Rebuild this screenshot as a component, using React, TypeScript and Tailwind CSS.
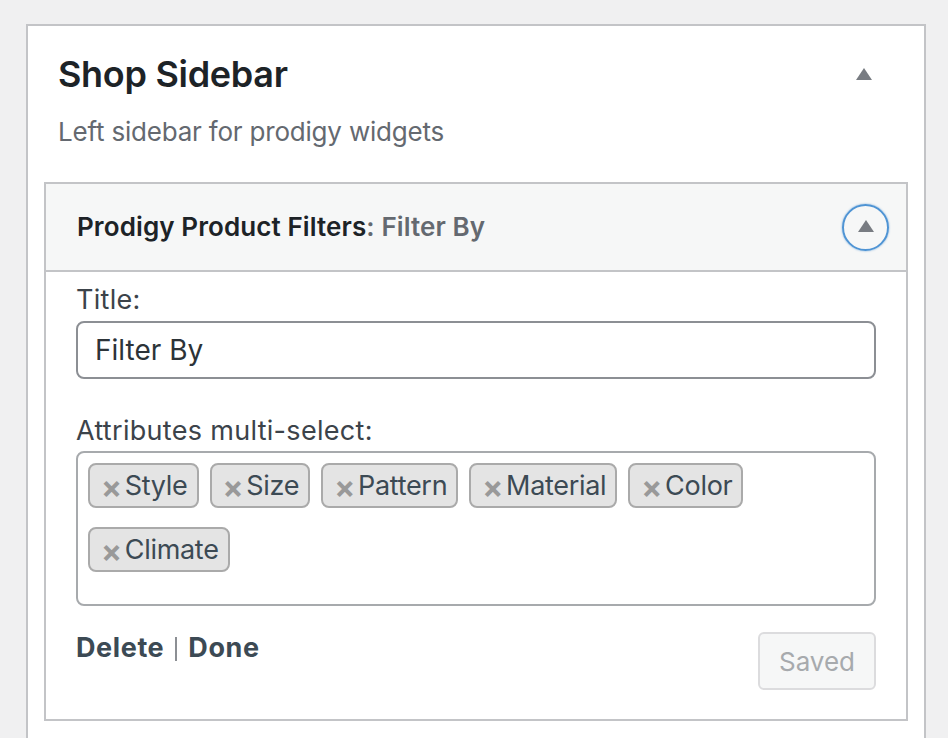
import React from 'react'

const tags = ['Style', 'Size', 'Pattern', 'Material', 'Color', 'Climate']

function Caret({ className = '' }: { className?: string }) {
    return (
        <svg width="16" height="12" viewBox="0 0 16 12" className={className}>
            <polygon points="8,0 16,12 0,12" fill="#787c82" />
        </svg>
    )
}

export default function App() {
    return (
        <div className="min-h-screen bg-[#f0f0f1] pl-[26px] pt-[24px] font-['Inter','Liberation_Sans',sans-serif] overflow-hidden">
            <div className="w-[900px] min-h-[760px] border-2 border-[#c3c4c7] bg-white">
                <div className="flex items-center justify-between pl-[30px] pr-[52px] pt-[26px]">
                    <h2 className="text-[36px] leading-[44px] font-semibold text-[#1d2327] tracking-[-0.3px]">
                        Shop Sidebar
                    </h2>
                    <Caret />
                </div>
                <p className="mt-[20px] pl-[30px] text-[26px] leading-[32px] text-[#646970] tracking-[-0.2px]">
                    Left sidebar for prodigy widgets
                </p>

                <div className="mx-[16px] mt-[34px] border-2 border-[#c3c4c7]">
                    <div className="flex h-[88px] items-center justify-between border-b-2 border-[#c3c4c7] bg-[#f6f7f7] pl-[31px] pr-[17px]">
                        <h3 className="text-[26px] leading-[32px] font-semibold text-[#1d2327] tracking-[0.1px]">
                            Prodigy Product Filters<span className="text-[#646970]">: Filter By</span>
                        </h3>
                        <button className="flex h-[47px] w-[47px] items-center justify-center rounded-full border-2 border-[#4f94d4] shadow-[0_0_2px_rgba(79,148,212,0.8)]">
                            <Caret className="-mt-[2px]" />
                        </button>
                    </div>

                    <div className="px-[30px] pt-[12px] pb-[29px]">
                        <label className="block text-[27px] leading-[32px] text-[#3c434a] tracking-[0.3px]">Title:</label>
                        <div className="mt-[5px] flex h-[58px] items-center rounded-[8px] border-2 border-[#8c8f94] pl-[17px] text-[28px] text-[#2c3338]">
                            Filter By
                        </div>

                        <label className="mt-[36px] block text-[27px] leading-[32px] text-[#3c434a] tracking-[0.3px]">
                            Attributes multi-select:
                        </label>
                        <div className="mt-[4px] h-[155px] rounded-[8px] border-2 border-[#a7aaad] pl-[10px] pt-[10px]">
                            <div className="flex flex-wrap gap-x-[11px] gap-y-[19px]">
                                {tags.map((t) => (
                                    <span
                                        key={t}
                                        className="flex h-[45px] items-center gap-[3px] rounded-[8px] border-2 border-[#aaaaaa] bg-[#e4e4e4] pl-[11px] pr-[9px] pt-[2px] text-[27px] text-[#3c4a54] tracking-[-0.3px]"
                                    >
                                        <span className="-mt-[1px] text-[31px] font-bold leading-none text-[#999999]">×</span>
                                        {t}
                                    </span>
                                ))}
                            </div>
                        </div>

                        <div className="mt-[26px] flex items-start justify-between">
                            <div className="flex items-center text-[27px] leading-[32px] text-[#3c4a54]">
                                <span className="font-bold tracking-[0.6px]">Delete</span>
                                <span className="mx-[11px] mt-[2px] h-[24px] w-[2px] bg-[#8c8f94]" />
                                <span className="font-bold tracking-[0.6px]">Done</span>
                            </div>
                            <button className="h-[58px] w-[118px] rounded-[6px] border-2 border-[#dcdcde] bg-[#f6f7f7] text-[26px] text-[#a7aaad]">
                                Saved
                            </button>
                        </div>
                    </div>
                </div>
            </div>
        </div>
    )
}
